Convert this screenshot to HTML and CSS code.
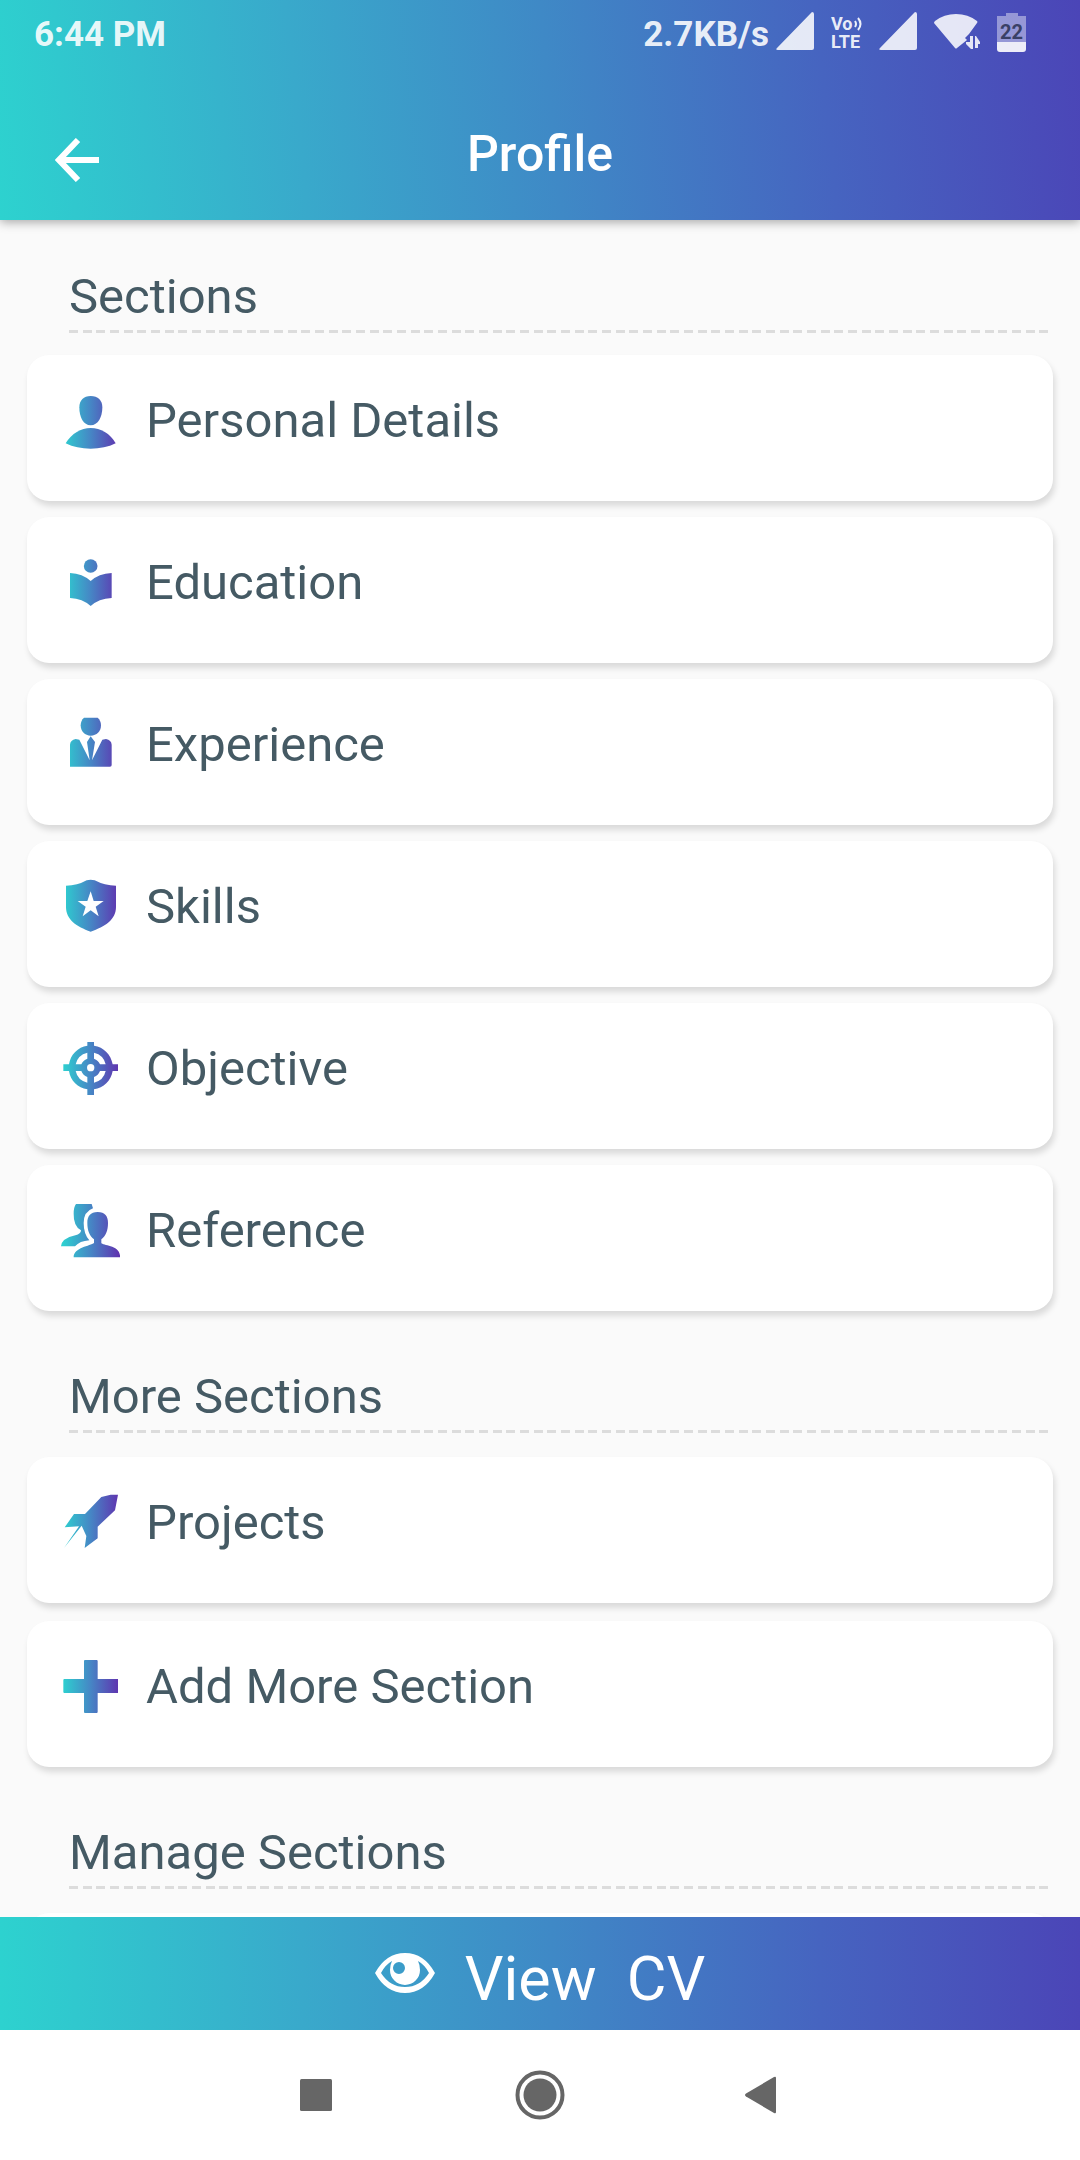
FILE: index.html
```html
<!DOCTYPE html>
<html lang="en">
<head>
<meta charset="utf-8">
<meta name="viewport" content="width=device-width, initial-scale=1">
<title>Profile</title>
<link rel="stylesheet" href="styles.css">
</head>
<body>
<svg class="defs" aria-hidden="true">
  <defs>
    <linearGradient id="brand" gradientUnits="userSpaceOnUse" x1="69" y1="0" x2="235" y2="0">
      <stop offset="0" stop-color="#2dd0d0"/>
      <stop offset="0.5" stop-color="#4686c5"/>
      <stop offset="1" stop-color="#5f35b0"/>
    </linearGradient>
  </defs>
</svg>

<header class="header">
  <div class="status">
    <span class="status-text">6:44 PM</span>
    <div class="status-icons">
      <span class="status-text">2.7KB/s</span>
      <svg class="signal" viewBox="0 0 38 38" aria-hidden="true"><path d="M36 0Q38 0 38 2V36Q38 38 36 38H2Q-1 38 1 36L35 1Z"/></svg>
      <span class="volte">
        <span class="volte-row">Vo<svg class="waves" viewBox="0 0 9 14" aria-hidden="true"><path d="M2 4Q4 7 2 10M5 1Q10 7 5 13"/></svg></span>
        <span class="volte-row">LTE</span>
      </span>
      <svg class="signal" viewBox="0 0 38 38" aria-hidden="true"><path d="M36 0Q38 0 38 2V36Q38 38 36 38H2Q-1 38 1 36L35 1Z"/></svg>
      <svg class="wifi" viewBox="0 0 46 38" aria-hidden="true">
        <path d="M1 8Q10 1 22 1T43 8Q44 9 43 10L35 21L31 25L33 27L23 35Q22 36 21 35L0 10Q0 9 1 8Z"/>
        <path d="M36 23H39V36H37L32 31V29H36ZM41 23H42L46 29V31H44V35H41Z"/>
      </svg>
      <span class="battery">22</span>
    </div>
  </div>
  <div class="toolbar">
    <button class="back" type="button" aria-label="Back">
      <svg viewBox="0 0 44 44"><path d="M23 2L4 22L23 42M4 22H44"/></svg>
    </button>
    <h1 class="title">Profile</h1>
  </div>
</header>

<main class="content">
  <section>
    <h2 class="section-title">Sections</h2>
    <ul class="cards cards-main">
      <li><button class="card" type="button">
        <svg class="icon" viewBox="60 450 186 180" aria-hidden="true">
          <path d="M152 465C174 465 187 478 187 499C187 529 174 553 152 553C130 553 118 529 118 499C118 478 131 465 152 465Z"/>
          <path d="M77 607C95 577 123 561 152 561C182 561 210 577 227 607C205 618 180 623 152 623C124 623 99 618 77 607Z"/>
        </svg>
        <span>Personal Details</span></button></li>
      <li><button class="card" type="button">
        <svg class="icon" viewBox="60 99 186 180" aria-hidden="true">
          <circle cx="152" cy="138" r="20.5"/>
          <path d="M90 159Q128 161 152 183Q176 161 215 159V234Q176 236 152 258Q128 236 90 234Z"/>
        </svg>
        <span>Education</span></button></li>
      <li><button class="card" type="button">
        <svg class="icon" viewBox="60 586 186 180" aria-hidden="true">
          <path d="M132 594H173Q183 603 183 617C183 635 170 648 152 648C135 648 122 635 122 617Q122 603 132 594Z"/>
          <path d="M90 741V675Q91 661 107 658L118 660L149 722L141 667L152 650L165 667L156 722L187 660L198 658Q214 661 215 675V736Q215 741 210 741Z"/>
        </svg>
        <span>Experience</span></button></li>
      <li><button class="card" type="button">
        <svg class="icon" viewBox="60 82 186 180" aria-hidden="true">
          <path fill-rule="evenodd" d="M78 108Q112 108 140 92Q152 88 164 92Q194 108 228 108V172C228 210 195 231 152 246C110 231 78 210 78 172ZM152 125L142 154H113L137 171L128 200L152 182L176 200L167 171L191 154H161Z"/>
        </svg>
        <span>Skills</span></button></li>
      <li><button class="card" type="button">
        <svg class="icon" viewBox="60 567 186 180" aria-hidden="true">
          <path d="M142 576H162V587C191 591 213 614 218 643H234V663H218C213 692 191 714 162 718V735H142V718C114 714 91 692 87 663H70V643H87C91 614 114 591 142 587Z"/>
          <path class="cut" d="M142 608V626Q129 631 124 643H107Q113 615 142 608ZM162 608Q191 615 197 643H180Q175 631 162 626ZM107 663H124Q129 676 142 681V698Q113 691 107 663ZM197 663Q191 691 162 698V681Q175 676 180 663Z"/>
          <circle class="cut" cx="152" cy="653" r="11"/>
        </svg>
        <span>Objective</span></button></li>
      <li><button class="card" type="button">
        <svg class="icon" viewBox="60 125 186 180" aria-hidden="true">
          <path d="M108 134H155L159 147Q131 157 131 191Q131 224 148 243Q119 245 105 261H63Q65 237 106 228Q123 224 123 213Q100 200 101 163Q101 143 108 134Z"/>
          <path d="M173 158C195 158 204 171 204 191C204 214 197 230 184 240V251C188 259 236 256 240 288V294H101C101 264 151 260 162 251V240C149 230 142 214 142 191C142 171 151 158 173 158Z"/>
        </svg>
        <span>Reference</span></button></li>
    </ul>
  </section>

  <section>
    <h2 class="section-title">More Sections</h2>
    <ul class="cards cards-more">
      <li><button class="card" type="button">
        <svg class="icon" viewBox="60 102 186 180" aria-hidden="true">
          <path d="M234 107L225 154L173 203V238L134 267L139 231L125 200L72 267L117 202L74 205L102 165H135L184 114L212 107Z"/>
        </svg>
        <span>Projects</span></button></li>
      <li><button class="card" type="button">
        <svg class="icon" viewBox="60 594 186 180" aria-hidden="true">
          <path d="M134 603H171L173 605V660H234V702H173V760L171 762H134L132 760V702H72L70 700V662L72 660H132V605Z"/>
        </svg>
        <span>Add More Section</span></button></li>
    </ul>
  </section>

  <section>
    <h2 class="section-title">Manage Sections</h2>
    <ul class="cards cards-more">
      <li><div class="card"></div></li>
    </ul>
  </section>
</main>

<button class="view-cv" type="button">
  <svg class="eye" viewBox="0 0 60 60" aria-hidden="true">
    <path fill-rule="evenodd" d="M0 30Q11 10 30 10T60 30Q49 50 30 50T0 30ZM6 30Q15 44 30 44T54 30Q50 22 43 18Q45 22 45 27A15 15 0 0 1 15 27Q15 22 17 18Q10 22 6 30ZM24 19A6 6 0 1 0 24 31A6 6 0 1 0 24 19Z"/>
  </svg>
  <span class="view-label">View&nbsp; CV</span>
</button>

<nav class="system-nav" aria-label="System">
  <button type="button" aria-label="Recent apps"><svg viewBox="0 0 64 64"><rect x="16" y="16" width="32" height="32" rx="1.5"/></svg></button>
  <button type="button" aria-label="Home"><svg viewBox="0 0 64 64"><circle cx="32" cy="32" r="22.5" fill="none" stroke="#666" stroke-width="4"/><circle cx="32" cy="32" r="16.5"/></svg></button>
  <button type="button" aria-label="Back"><svg viewBox="0 0 64 64"><path d="M42 14Q44 13 44 15V49Q44 51 42 50L14 33.500Q12 32 14 30.500Z"/></svg></button>
</nav>
</body>
</html>
```

FILE: styles.css
```css
* {
  box-sizing: border-box;
}

body {
  margin: 0;
  height: 100vh;
  display: flex;
  flex-direction: column;
  background: #fafafa;
  color: #455a64;
  font-family: Roboto, "Liberation Sans", sans-serif;
}

button {
  border: 0;
  padding: 0;
  background: none;
  color: inherit;
  font: inherit;
  cursor: pointer;
}

svg {
  display: block;
}

.defs {
  position: absolute;
  width: 0;
  height: 0;
}

/* Header */
.header {
  flex: none;
  position: relative;
  height: 220px;
  background: linear-gradient(84deg, #2dd2cf 0%, #39a9cb 28%, #3f89c6 51%, #4664c0 76%, #4b45b7 100%);
  box-shadow: 0 2px 10px rgba(0, 0, 0, 0.35);
  color: #fff;
}

.status {
  display: flex;
  justify-content: space-between;
  height: 68px;
  padding: 12px 54px 0 34px;
  color: rgba(255, 255, 255, 0.9);
  fill: rgba(255, 255, 255, 0.86);
}

.status-text {
  font-size: 35px;
  line-height: 46px;
  font-weight: 700;
}

.status-icons {
  display: flex;
  align-items: flex-start;
}

.signal {
  width: 38px;
  height: 38px;
  margin-left: 7px;
}

.volte {
  width: 36px;
  margin: 3px 5px 0 17px;
  font-size: 18px;
  line-height: 18px;
  font-weight: 700;
}

.volte-row {
  display: flex;
  align-items: center;
}

.waves {
  width: 9px;
  height: 14px;
  fill: none;
  stroke: currentColor;
  stroke-width: 2;
}

.wifi {
  width: 46px;
  height: 38px;
  margin: 1px 17px 0;
}

.battery {
  width: 29px;
  height: 39px;
  margin-top: 1px;
  padding-top: 9px;
  border-radius: 3px;
  background:
    linear-gradient(rgba(255, 255, 255, 0.42) 0 0) 50% 0 / 12px 3px no-repeat,
    linear-gradient(rgba(255, 255, 255, 0.42) 0 26px, rgba(255, 255, 255, 0.9) 26px) 0 3px / 100% 36px no-repeat;
  color: #3a4066;
  font-size: 20px;
  line-height: 20px;
  font-weight: 700;
  text-align: center;
}

.toolbar {
  display: grid;
  grid-template-columns: 1fr auto 1fr;
  align-items: start;
  padding: 56px 39px 0;
}

.back {
  width: 76px;
  height: 72px;
  padding: 0 16px;
}

.back svg {
  width: 44px;
  height: 44px;
  fill: none;
  stroke: #fff;
  stroke-width: 6;
}

.title {
  margin: 0;
  font-size: 50px;
  line-height: 60px;
  font-weight: 500;
}

/* Section lists */
.content {
  flex: 1;
  min-height: 0;
  overflow-y: auto;
  scrollbar-width: none;
  display: flex;
  flex-direction: column;
  gap: 56px;
  padding: 47px 27px 0;
}

.section-title {
  margin: 0 5px 0 42px;
  padding-bottom: 6px;
  background: linear-gradient(90deg, #dcdcdc 9px, transparent 9px 14px, #dcdcdc 14px 23px, transparent 23px 27px, #dcdcdc 27px 36px, transparent 36px) 0 100% / 41px 3px repeat-x;
  font-size: 49px;
  line-height: 60px;
  font-weight: 400;
}

.cards {
  list-style: none;
  margin: 0;
  padding: 0;
  display: flex;
  flex-direction: column;
}

.cards-main {
  gap: 16px;
  margin-top: 22px;
}

.cards-more {
  gap: 18px;
  margin-top: 24px;
}

.card {
  display: flex;
  align-items: flex-start;
  gap: 24px;
  width: 100%;
  min-height: 146px;
  padding: 36px 33px 50px;
  border-radius: 22px;
  background: #fff;
  box-shadow: 2px 5px 6px rgba(0, 0, 0, 0.13);
  font-size: 49px;
  line-height: 60px;
  text-align: left;
}

.icon {
  flex: none;
  width: 62px;
  height: 60px;
  fill: url(#brand);
}

.icon .cut {
  fill: #fff;
}

/* Bottom action */
.view-cv {
  flex: none;
  position: relative;
  display: flex;
  justify-content: center;
  gap: 30px;
  padding: 26px 24px 15px;
  background: linear-gradient(90deg, #2dd2cf 0%, #39a9cb 28%, #3f89c6 51%, #4664c0 76%, #4b45b7 100%);
  color: #fff;
  font-size: 61px;
  line-height: 72px;
}

.eye {
  width: 60px;
  height: 60px;
  fill: #fff;
}

.system-nav {
  flex: none;
  display: flex;
  justify-content: center;
  align-items: center;
  gap: 160px;
  height: 130px;
  background: #fff;
  fill: #666;
}

.system-nav svg {
  width: 64px;
  height: 64px;
}
```
